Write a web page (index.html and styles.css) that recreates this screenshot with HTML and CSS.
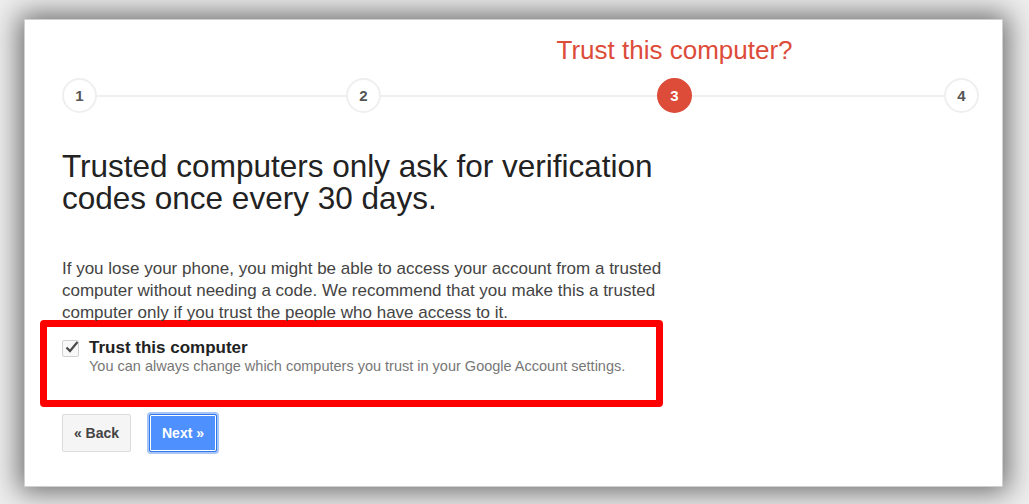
FILE: index.html
```html
<!DOCTYPE html>
<html>
<head>
<meta charset="utf-8">
<link rel="stylesheet" href="styles.css">
</head>
<body>
<div class="card">
  <div class="stepper">
    <div class="step"><div class="step-label"></div><div class="dot">1</div></div>
    <div class="line l1"></div>
    <div class="step"><div class="step-label"></div><div class="dot">2</div></div>
    <div class="line l2"></div>
    <div class="step"><div class="step-label">Trust this computer?</div><div class="dot active">3</div></div>
    <div class="line l3"></div>
    <div class="step"><div class="step-label"></div><div class="dot">4</div></div>
  </div>

  <h1 class="title">Trusted computers only ask for verification codes once every 30 days.</h1>

  <p class="desc">If you lose your phone, you might be able to access your account from a trusted computer without needing a code. We recommend that you make this a trusted computer only if you trust the people who have access to it.</p>

  <div class="highlight">
    <label class="trust">
      <span class="checkbox">
        <svg viewBox="0 0 17 17" width="17" height="17"><path d="M3.5 8.5 L7 12 L14.5 3" fill="none" stroke="#4a4a4a" stroke-width="2.2"/></svg>
      </span>
      <span class="trust-text">
        <span class="trust-title">Trust this computer</span>
        <span class="trust-note">You can always change which computers you trust in your Google Account settings.</span>
      </span>
    </label>
  </div>

  <div class="actions">
    <button class="btn btn-back">« Back</button>
    <button class="btn btn-next">Next »</button>
  </div>
</div>
</body>
</html>
```

FILE: styles.css
```css
* { box-sizing: border-box; }

html, body {
  margin: 0;
  padding: 0;
}

body {
  width: 1029px;
  height: 504px;
  overflow: hidden;
  background: #eeeeee;
  font-family: "Liberation Sans", Arial, sans-serif;
  padding: 19px 26px 0 24px;
}

.card {
  width: 979px;
  height: 468px;
  background: #fff;
  border: 1px solid #d0d0d0;
  box-shadow: 0 0 26px 5px rgba(0, 0, 0, 0.55);
  padding: 15px 0 0 37px;
}

.stepper {
  display: flex;
  align-items: flex-end;
  width: 917px;
}

.step {
  display: flex;
  flex-direction: column;
  align-items: center;
  width: 35px;
  flex: none;
}

.step-label {
  display: flex;
  justify-content: center;
  width: 35px;
  height: 30px;
  line-height: 30px;
  font-size: 26px;
  color: #dd4b39;
  white-space: nowrap;
  margin-bottom: 13px;
}

.dot {
  width: 35px;
  height: 35px;
  border-radius: 50%;
  border: 2px solid #efefef;
  background: #fff;
  color: #555;
  font-weight: bold;
  font-size: 15px;
  display: flex;
  align-items: center;
  justify-content: center;
}

.dot.active {
  background: #dd4b39;
  border-color: #dd4b39;
  color: #fff;
}

.line {
  height: 2px;
  background: #efefef;
  margin-bottom: 16px;
  flex: none;
}
.l1 { width: 249px; }
.l2 { width: 276px; }
.l3 { width: 252px; }

.title {
  margin: 37px 0 0;
  width: 640px;
  font-size: 31.5px;
  line-height: 32px;
  font-weight: normal;
  color: #222;
}

.desc {
  margin: 44px 0 0;
  width: 620px;
  font-size: 17px;
  line-height: 22px;
  color: #444;
}

.highlight {
  margin: -4px 0 0 -22px;
  width: 623px;
  height: 87px;
  border: 7px solid #ff0000;
  border-radius: 4px;
  padding: 11px 0 0 15px;
}

.trust {
  display: flex;
  align-items: flex-start;
  gap: 10px;
}

.checkbox {
  width: 17px;
  height: 17px;
  margin-top: 2px;
  border: 1px solid #d0d0d0;
  border-radius: 2px;
  background: #f8f8f8;
  display: flex;
  flex: none;
  position: relative;
}

.checkbox svg {
  position: absolute;
  left: 0;
  top: -2px;
}

.trust-text {
  display: flex;
  flex-direction: column;
}

.trust-title {
  font-weight: bold;
  font-size: 17px;
  line-height: 20px;
  color: #222;
}

.trust-note {
  font-size: 14.5px;
  line-height: 17px;
  color: #777;
}

.actions {
  display: flex;
  gap: 18px;
  margin-top: 7px;
}

.btn {
  font-family: "Liberation Sans", Arial, sans-serif;
  font-weight: bold;
  font-size: 14px;
  height: 38px;
  border-radius: 2px;
  padding: 0;
  white-space: nowrap;
  cursor: pointer;
}

.btn-back {
  width: 69px;
  background: #f5f5f5;
  border: 1px solid #dcdcdc;
  color: #444;
}

.btn-next {
  width: 68px;
  background: #4d90fe;
  border: 1px solid #3079ed;
  color: #fff;
  box-shadow: 0 0 0 2px #a9c5f5, inset 0 0 0 1px #fff;
}
```
